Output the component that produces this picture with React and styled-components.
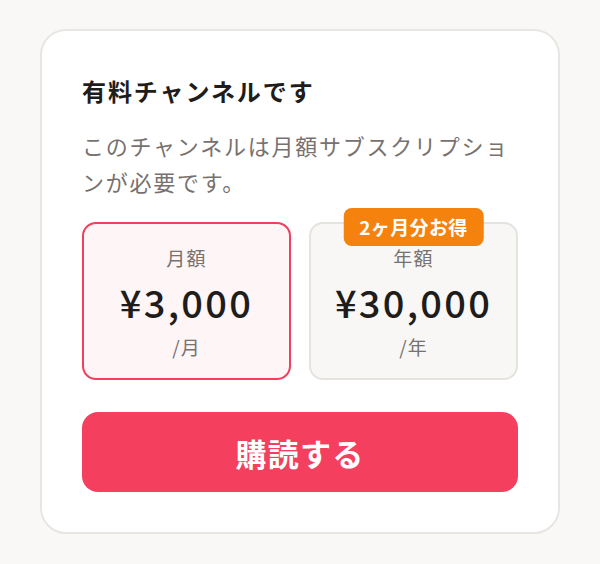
import React, { useState } from "react";
import styled, { createGlobalStyle } from "styled-components";

const GlobalStyle = createGlobalStyle`
  html, body {
    margin: 0;
    padding: 0;
    background: #f9f8f6;
  }
  body {
    font-family: "Noto Sans CJK JP", "Noto Sans", sans-serif;
    color: #1f1c1c;
  }
  * { box-sizing: border-box; }
`;

const Page = styled.div`
  width: 600px;
  height: 564px;
  padding: 29px 40px 0;
`;

const Card = styled.section`
  background: #ffffff;
  border: 2px solid #e8e6e3;
  border-radius: 26px;
  padding: 38px 40px 40px;
  display: flex;
  flex-direction: column;
`;

const Title = styled.h2`
  margin: 0;
  font-size: 24px;
  line-height: 44px;
  font-weight: 700;
  letter-spacing: 0.08em;
  color: #1f1c1c;
`;

const Description = styled.p`
  margin: 14px 0 0;
  font-size: 22px;
  line-height: 36px;
  letter-spacing: 0.08em;
  color: #77716f;
`;

const Plans = styled.div`
  margin-top: 23px;
  display: grid;
  grid-template-columns: 1fr 1fr;
  gap: 18px;
`;

const Plan = styled.button`
  position: relative;
  height: 158px;
  border-radius: 14px;
  border: 2px solid ${(p) => (p.$active ? "#f0405e" : "#e5e3e0")};
  background: ${(p) => (p.$active ? "#fdf5f6" : "#f8f7f5")};
  display: flex;
  flex-direction: column;
  align-items: center;
  justify-content: flex-start;
  padding: 21px 0 0;
  font-family: inherit;
  cursor: pointer;
`;

const PlanLabel = styled.span`
  font-size: 19px;
  line-height: 26px;
  color: #77716f;
  letter-spacing: 0.06em;
`;

const Price = styled.span`
  margin-top: 7px;
  font-size: 38px;
  line-height: 48px;
  font-weight: 500;
  letter-spacing: 0.06em;
  color: #1f1c1c;
`;

const Unit = styled.span`
  margin-top: 8px;
  font-size: 19px;
  line-height: 26px;
  color: #77716f;
  letter-spacing: 0.06em;
`;

const Badge = styled.span`
  position: absolute;
  top: -16px;
  left: 50%;
  transform: translateX(-50%);
  height: 38px;
  padding: 0 16px;
  border-radius: 8px;
  background: #f5820c;
  color: #ffffff;
  font-size: 19px;
  font-weight: 700;
  line-height: 38px;
  letter-spacing: 0.02em;
  white-space: nowrap;
`;

const SubscribeButton = styled.button`
  margin-top: 32px;
  height: 80px;
  border: none;
  border-radius: 16px;
  background: #f43f5f;
  color: #ffffff;
  font-family: inherit;
  font-size: 31px;
  font-weight: 700;
  letter-spacing: 0.04em;
  cursor: pointer;
`;

const plans = [
  { id: "month", label: "月額", price: "¥3,000", unit: "/月" },
  { id: "year", label: "年額", price: "¥30,000", unit: "/年", badge: "2ヶ月分お得" },
];

export default function App() {
  const [selected, setSelected] = useState("month");
  return (
    <>
      <GlobalStyle />
      <Page>
        <Card>
          <Title>有料チャンネルです</Title>
          <Description>
            このチャンネルは月額サブスクリプションが必要です。
          </Description>
          <Plans>
            {plans.map((p) => (
              <Plan
                key={p.id}
                $active={selected === p.id}
                onClick={() => setSelected(p.id)}
              >
                {p.badge && <Badge>{p.badge}</Badge>}
                <PlanLabel>{p.label}</PlanLabel>
                <Price>{p.price}</Price>
                <Unit>{p.unit}</Unit>
              </Plan>
            ))}
          </Plans>
          <SubscribeButton>購読する</SubscribeButton>
        </Card>
      </Page>
    </>
  );
}
